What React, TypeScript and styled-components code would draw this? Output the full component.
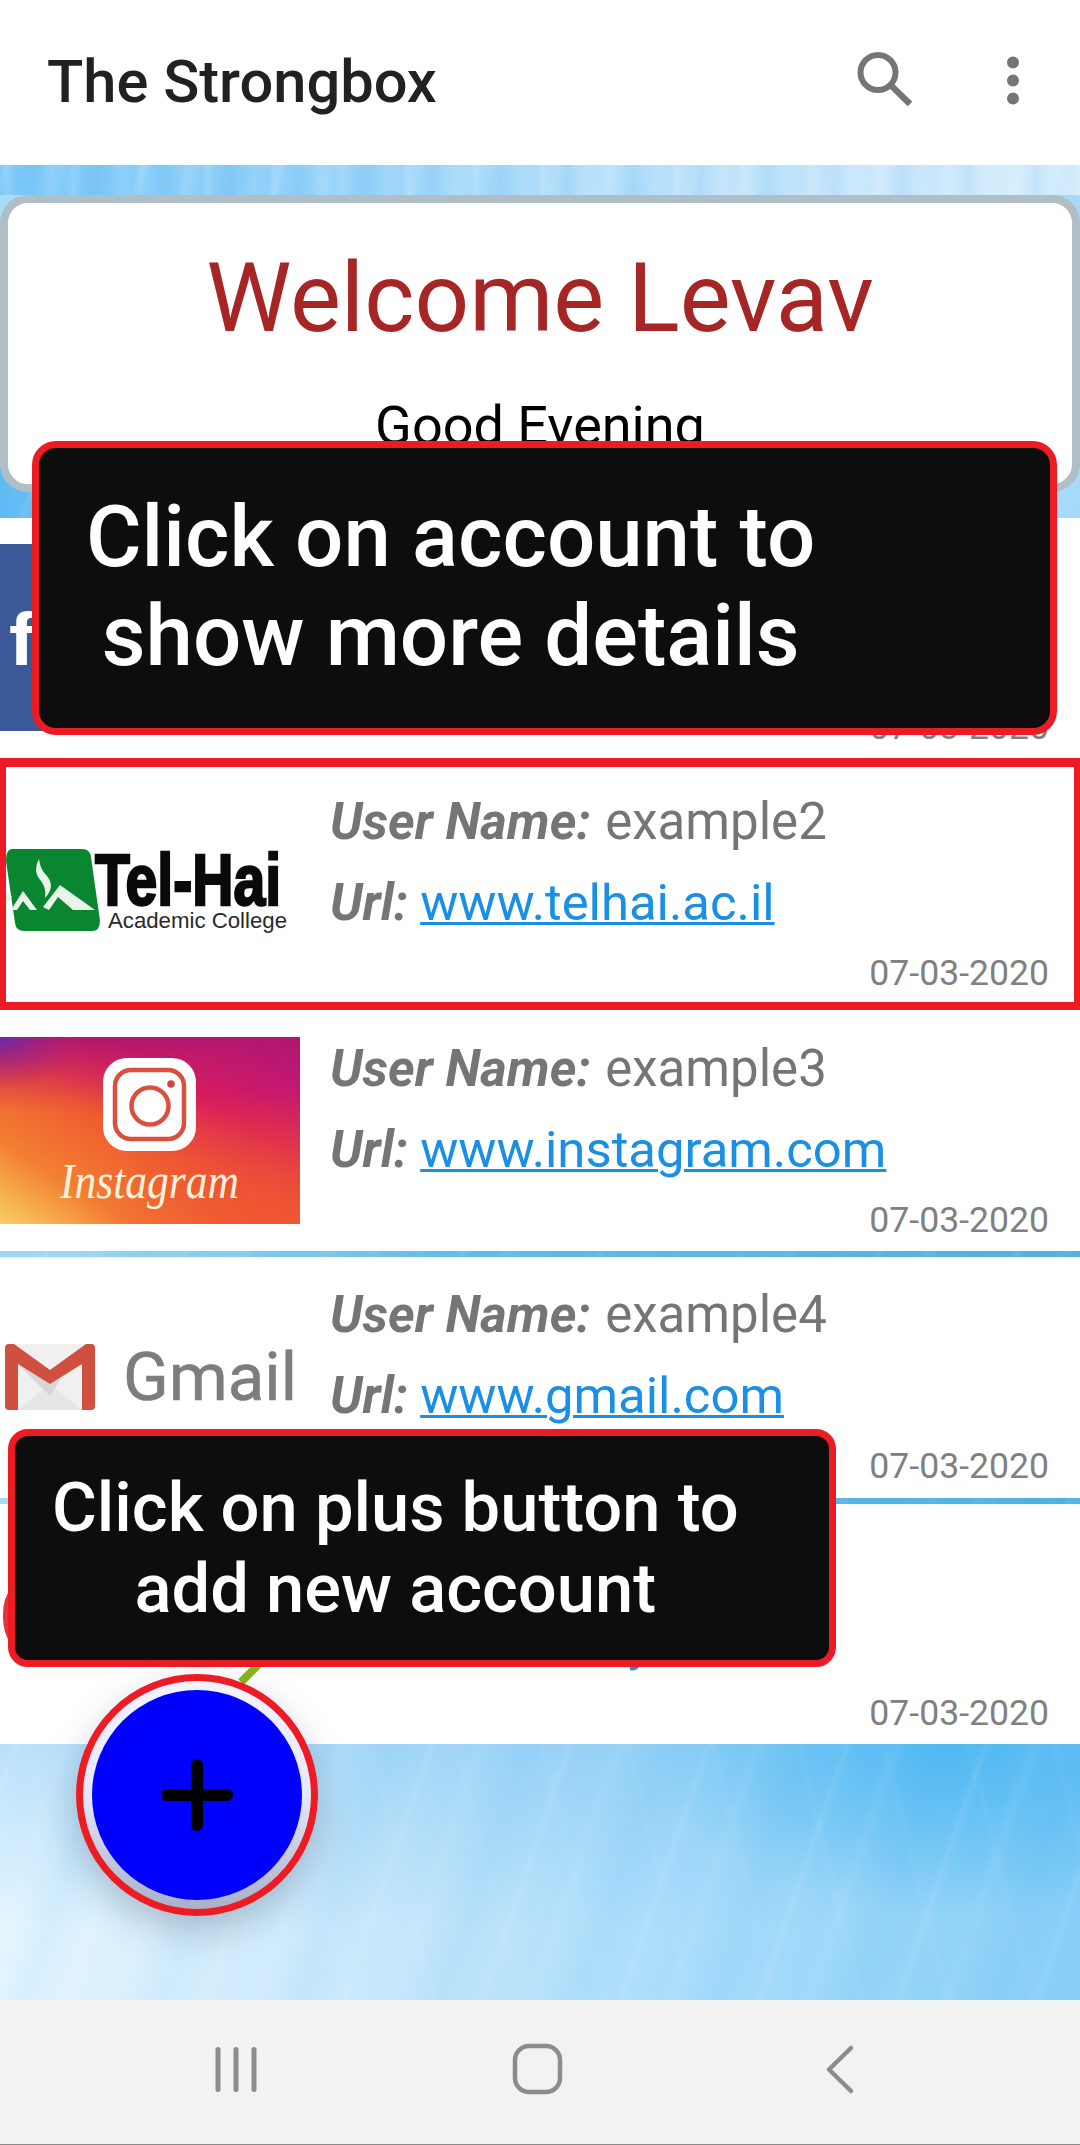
import React from "react";
import styled, { createGlobalStyle } from "styled-components";

const Global = createGlobalStyle`
  html, body { margin: 0; padding: 0; background: #fff; }
  * { box-sizing: border-box; }
`;

const Screen = styled.div`
  position: relative;
  width: 1080px;
  height: 2145px;
  overflow: hidden;
  display: flex;
  flex-direction: column;
  font-family: Roboto, "Liberation Sans", sans-serif;
  background: #fff;
`;

const AppBar = styled.header`
  height: 165px;
  flex: none;
  display: flex;
  align-items: center;
  padding: 0 0 2px 47px;
  background: #fff;
`;

const Title = styled.h1`
  margin: 0;
  flex: 1;
  font-size: 59.6px;
  font-weight: 500;
  color: #212121;
`;

const AppIcon = styled.svg<{ $wide: number }>`
  display: block;
  width: ${(p) => p.$wide}px;
  height: 80px;
  flex: none;
`;

const Actions = styled.div`
  display: flex;
  align-items: center;
  gap: 80px;
  margin-right: 59px;
`;

const Backdrop = styled.main`
  flex: 1;
  display: flex;
  flex-direction: column;
  padding-top: 30px;
  background-color: #a9dbfa;
  background-repeat: no-repeat;
  background-image:
    repeating-linear-gradient(91deg, rgba(255,255,255,0) 0, rgba(255,255,255,.14) 7px, rgba(255,255,255,0) 16px, rgba(80,165,235,.12) 31px, rgba(80,165,235,0) 43px, rgba(255,255,255,.09) 52px, rgba(255,255,255,0) 67px),
    repeating-linear-gradient(109deg, rgba(255,255,255,0) 0, rgba(255,255,255,.08) 5px, rgba(255,255,255,0) 12px, rgba(255,255,255,0) 41px, rgba(255,255,255,.06) 52px, rgba(255,255,255,0) 63px, rgba(50,160,235,.06) 95px, rgba(255,255,255,0) 131px),
    repeating-linear-gradient(76deg, rgba(255,255,255,0) 0, rgba(255,255,255,.04) 6px, rgba(255,255,255,0) 13px, rgba(255,255,255,0) 83px),
    linear-gradient(90deg, #7cc8f8 0%, #8fd0f9 25%, #b4dffa 55%, #d8eefc 100%),
    linear-gradient(90deg, #62bcf4 0%, #7ac6f6 20%, #a8dcfa 100%),
    linear-gradient(92deg, #a9dcf2 0%, #63bae8 45%, #4fb0e4 100%),
    radial-gradient(ellipse 300px 170px at 88% 0, rgba(50,175,240,.6), rgba(50,175,240,0)),
    linear-gradient(180deg, rgba(60,165,235,.26) 0%, rgba(60,165,235,0) 72%),
    linear-gradient(97deg, #e6f6ff 0%, #c8e8fb 35%, #a8dcfa 65%, #86cef7 100%);
  background-size:
    100% 30px,
    100% 100%,
    100% 100%,
    100% 30px,
    100% 60px,
    100% 1078px,
    100% 257px,
    100% 257px,
    100% 257px;
  background-position:
    0 0,
    0 0,
    0 0,
    0 0,
    0 300px,
    0 500px,
    0 100%,
    0 100%,
    0 100%;
`;

const Greeting = styled.section`
  height: 297px;
  flex: none;
  border: 8px solid #b0bec5;
  border-radius: 28px;
  background: #fff;
  text-align: center;
  overflow: hidden;
`;

const Welcome = styled.div`
  margin-top: 40px;
  font-size: 96px;
  line-height: 110px;
  color: #a62626;
`;

const Daypart = styled.div`
  margin-top: 45px;
  font-size: 54px;
  line-height: 56px;
  color: #000;
`;

const List = styled.div`
  margin-top: 25.5px;
  display: flex;
  flex-direction: column;
`;

const Row = styled.article<{ $seamless?: boolean }>`
  height: 246.5px;
  flex: none;
  display: flex;
  align-items: flex-start;
  background: #fff;
  background-clip: ${(p) => (p.$seamless ? "border-box" : "padding-box")};
  border-bottom: 6.5px solid transparent;
`;

const LogoBox = styled.svg`
  display: block;
  flex: none;
  width: 300px;
  height: 187px;
  margin-top: 26.5px;
`;

const Info = styled.div`
  flex: 1;
  padding: 17px 31px 0 30px;
`;

const Line = styled.div`
  height: 81px;
  font-size: 51px;
  line-height: 81px;
  color: #757575;
  white-space: nowrap;
`;

const Label = styled.b`
  font-style: italic;
  font-weight: 700;
  margin-right: 2px;
`;

const Address = styled.a`
  margin-left: -2.5px;
  font-size: 50.8px;
  color: #1a8fe3;
  text-decoration: underline;
  text-decoration-thickness: 3px;
  text-underline-offset: 2px;
`;

const Stamp = styled.div`
  margin-top: 10px;
  text-align: right;
  font-size: 35.6px;
  line-height: 40px;
  color: #808080;
`;

const Callout = styled.div`
  position: absolute;
  display: flex;
  align-items: center;
  border: 7px solid #ed1c24;
  background: #0d0d0d;
  color: #fff;
  font-weight: 500;
  text-align: center;
  white-space: pre-line;
`;

const AccountCallout = styled(Callout)`
  left: 32px;
  top: 441px;
  width: 1025px;
  height: 294px;
  border-radius: 24px;
  padding: 0 0 2px 47px;
  font-size: 85.2px;
  line-height: 99px;
`;

const PlusCallout = styled(Callout)`
  left: 8px;
  top: 1429px;
  width: 828px;
  height: 238px;
  border-radius: 20px;
  padding: 0 0 0 37px;
  font-size: 68.7px;
  line-height: 81px;
`;

const RowFrame = styled.div`
  position: absolute;
  left: 0;
  top: 758px;
  width: 1080px;
  height: 252px;
  border: solid #ed1c24;
  border-width: 9px 6px 8px;
`;

const FabRing = styled.div`
  position: absolute;
  left: 76px;
  top: 1674px;
  width: 242px;
  height: 242px;
  border-radius: 50%;
  border: 7px solid #ed1c24;
  display: flex;
  align-items: center;
  justify-content: center;
  box-shadow: 0 14px 36px rgba(60, 70, 90, 0.28);
  background: linear-gradient(180deg, #f4f4ff 0%, #e4e8f8 50%, #a9b0c8 100%);
`;

const Fab = styled.button`
  width: 210px;
  height: 210px;
  padding: 0;
  border: 0;
  border-radius: 50%;
  background: #0000ff;
  display: flex;
  align-items: center;
  justify-content: center;
`;

const PlusIcon = styled.svg`
  display: block;
  width: 72px;
  height: 72px;
`;

const NavBar = styled.nav`
  height: 145px;
  flex: none;
  display: flex;
  justify-content: center;
  background: #f2f2f2;
  border-bottom: 1px solid #8a8a8a;
`;

const NavIcons = styled.svg`
  display: block;
  width: 1080px;
  height: 144px;
`;

const Search = () => (
  <AppIcon $wide={80} viewBox="0 0 80 80">
    <circle cx="33" cy="30.5" r="17.5" fill="none" stroke="#757575" strokeWidth="6" />
    <path d="M45.5 43 L65 62" stroke="#757575" strokeWidth="6.5" fill="none" />
  </AppIcon>
);

const More = () => (
  <AppIcon $wide={16} viewBox="0 0 16 80">
    <circle cx="8" cy="20.5" r="6" fill="#757575" />
    <circle cx="8" cy="38.5" r="6" fill="#757575" />
    <circle cx="8" cy="56.5" r="6" fill="#757575" />
  </AppIcon>
);

const FacebookLogo = () => (
  <LogoBox viewBox="0 0 300 187">
    <rect width="300" height="187" fill="#3b5998" />
    <text x="9" y="121" fontFamily="'Liberation Sans', sans-serif" fontWeight="700" fontSize="74" fill="#fff" textLength="340" lengthAdjust="spacingAndGlyphs">facebook</text>
  </LogoBox>
);

const TelHaiLogo = () => (
  <LogoBox viewBox="0 0 300 187">
    <path d="M12 58 H82 Q90 58 91 66 L100 130 Q100 140 92 140 H24 Q16 140 15 132 L6 70 Q6 58 12 58 Z" fill="#0a8630" />
    <path d="M39 68 C34 78 36 84 41 90 C45 96 46 100 45 107 C52 100 53 92 47 85 C42 80 40 75 39 68 Z" fill="#e8f4e8" />
    <path d="M43 116 L60 94 L95 119 L73 119 L58 106 L49 119 Z" fill="#e8f4e8" />
    <path d="M11 119 L23 100 L37 119 L30 119 L23 110 L17 119 Z" fill="#e8f4e8" />
    <path d="M6 100 L12 106 L7 112 Z" fill="#e8f4e8" />
    <text x="95" y="114" fontFamily="'Liberation Sans', sans-serif" fontWeight="700" fontSize="72" fill="#0a0a0a" stroke="#0a0a0a" strokeWidth="2.5" textLength="186" lengthAdjust="spacingAndGlyphs">Tel-Hai</text>
    <text x="108" y="137" fontFamily="'Liberation Sans', sans-serif" fontSize="22" fill="#2a2a2a" textLength="179" lengthAdjust="spacingAndGlyphs">Academic College</text>
  </LogoBox>
);

const InstagramLogo = () => (
  <LogoBox viewBox="0 0 300 187">
    <defs>
      <linearGradient id="igBase" x1="0" y1="1" x2="1" y2="0">
        <stop offset="0" stopColor="#f9cf60" />
        <stop offset="0.22" stopColor="#f37f32" />
        <stop offset="0.45" stopColor="#ef5b30" />
        <stop offset="0.68" stopColor="#d81a5c" />
        <stop offset="0.85" stopColor="#c0127a" />
        <stop offset="1" stopColor="#950fa8" />
      </linearGradient>
      <radialGradient id="igCorner" cx="0" cy="0" r="0.28">
        <stop offset="0" stopColor="#6a2ba8" />
        <stop offset="1" stopColor="#b3206e" stopOpacity="0" />
      </radialGradient>
      <radialGradient id="igEdge" cx="1" cy="1" r="0.75">
        <stop offset="0" stopColor="#ef5632" />
        <stop offset="1" stopColor="#ef5632" stopOpacity="0" />
      </radialGradient>
      <linearGradient id="igTop" x1="0" y1="0" x2="0" y2="1">
        <stop offset="0" stopColor="#b3166f" />
        <stop offset="0.4" stopColor="#d3255a" stopOpacity="0" />
      </linearGradient>
    </defs>
    <rect width="300" height="187" fill="url(#igBase)" />
    <rect width="300" height="187" fill="url(#igEdge)" />
    <rect width="300" height="187" fill="url(#igTop)" />
    <rect width="300" height="187" fill="url(#igCorner)" />
    <rect x="103" y="21" width="93" height="93" rx="24" fill="#fff" />
    <rect x="115" y="33" width="69" height="69" rx="16" fill="none" stroke="#d9503f" strokeWidth="4.5" />
    <circle cx="150" cy="69" r="18.5" fill="none" stroke="#d9503f" strokeWidth="4.5" />
    <circle cx="171" cy="47" r="3.8" fill="#d2404a" />
    <text x="60" y="161" fontFamily="'Liberation Serif', serif" fontStyle="italic" fontSize="50" fill="#fdf2dc" textLength="179" lengthAdjust="spacingAndGlyphs">Instagram</text>
  </LogoBox>
);

const GmailLogo = () => (
  <LogoBox viewBox="0 0 300 187">
    <rect x="5" y="60" width="90" height="66" rx="3" fill="#f0f0f0" />
    <path d="M18 126 L50 100 L82 126 Z" fill="#e6e6e6" />
    <path d="M18 80 L50 100 L62 93 L50 112 Z" fill="#d6d6d6" />
    <path d="M5 64 Q5 60 9 60 H14 L50 86 L86 60 H91 Q95 60 95 64 V122 Q95 126 91 126 H82 V80 L50 100 L18 80 V126 H9 Q5 126 5 122 Z" fill="#d0503f" />
    <text x="123" y="116" fontFamily="Roboto, sans-serif" fontSize="66" fill="#7d7d7d" stroke="#7d7d7d" strokeWidth="0.6" textLength="174" lengthAdjust="spacingAndGlyphs">Gmail</text>
  </LogoBox>
);

const EbayLogo = () => (
  <LogoBox viewBox="0 0 300 187">
    <text x="-3" y="123" fontFamily="'Liberation Sans', sans-serif" fontSize="140" fontWeight="400" letterSpacing="-3">
      <tspan fill="#e53238">e</tspan>
      <tspan fill="#0064d2">b</tspan>
      <tspan fill="#f5af02">a</tspan>
      <tspan fill="#86b817" dy="-16">y</tspan>
    </text>
    <path d="M258 135 L241 152" stroke="#86b817" strokeWidth="8" fill="none" />
  </LogoBox>
);

type Account = { user: string; url: string; Logo: React.FC; seamless?: boolean };

const accounts: Account[] = [
  { user: "example1", url: "www.facebook.com", Logo: FacebookLogo, seamless: true },
  { user: "example2", url: "www.telhai.ac.il", Logo: TelHaiLogo, seamless: true },
  { user: "example3", url: "www.instagram.com", Logo: InstagramLogo },
  { user: "example4", url: "www.gmail.com", Logo: GmailLogo },
  { user: "example5", url: "www.ebay.com", Logo: EbayLogo },
];

export default function App() {
  return (
    <Screen>
      <Global />
      <AppBar>
        <Title>The Strongbox</Title>
        <Actions>
          <Search />
          <More />
        </Actions>
      </AppBar>
      <Backdrop>
        <Greeting>
          <Welcome>Welcome Levav</Welcome>
          <Daypart>Good Evening</Daypart>
        </Greeting>
        <List>
          {accounts.map(({ user, url, Logo, seamless }) => (
            <Row key={user} $seamless={seamless}>
              <Logo />
              <Info>
                <Line>
                  <Label>User Name:</Label> {user}
                </Line>
                <Line>
                  <Label>Url:</Label> <Address>{url}</Address>
                </Line>
                <Stamp>07-03-2020</Stamp>
              </Info>
            </Row>
          ))}
        </List>
      </Backdrop>
      <NavBar>
        <NavIcons viewBox="0 0 1080 144">
          <g fill="#8c8c8c">
            <rect x="215.5" y="47" width="5" height="45" rx="2.5" />
            <rect x="233.5" y="47" width="5" height="45" rx="2.5" />
            <rect x="251.5" y="47" width="5" height="45" rx="2.5" />
          </g>
          <rect x="515" y="46" width="45" height="46" rx="14" fill="none" stroke="#8c8c8c" strokeWidth="4.5" />
          <path d="M851 48 L829 69.5 L851 91" fill="none" stroke="#8c8c8c" strokeWidth="4.5" strokeLinecap="round" strokeLinejoin="round" />
        </NavIcons>
      </NavBar>
      <RowFrame />
      <AccountCallout>
        <div>{"Click on account to\nshow more details"}</div>
      </AccountCallout>
      <PlusCallout>
        <div>{"Click on plus button to\nadd new account"}</div>
      </PlusCallout>
      <FabRing>
        <Fab aria-label="Add account">
          <PlusIcon viewBox="0 0 72 72">
            <path d="M36 6 V66 M6 36 H66" stroke="#000" strokeWidth="12" strokeLinecap="round" />
          </PlusIcon>
        </Fab>
      </FabRing>
    </Screen>
  );
}
